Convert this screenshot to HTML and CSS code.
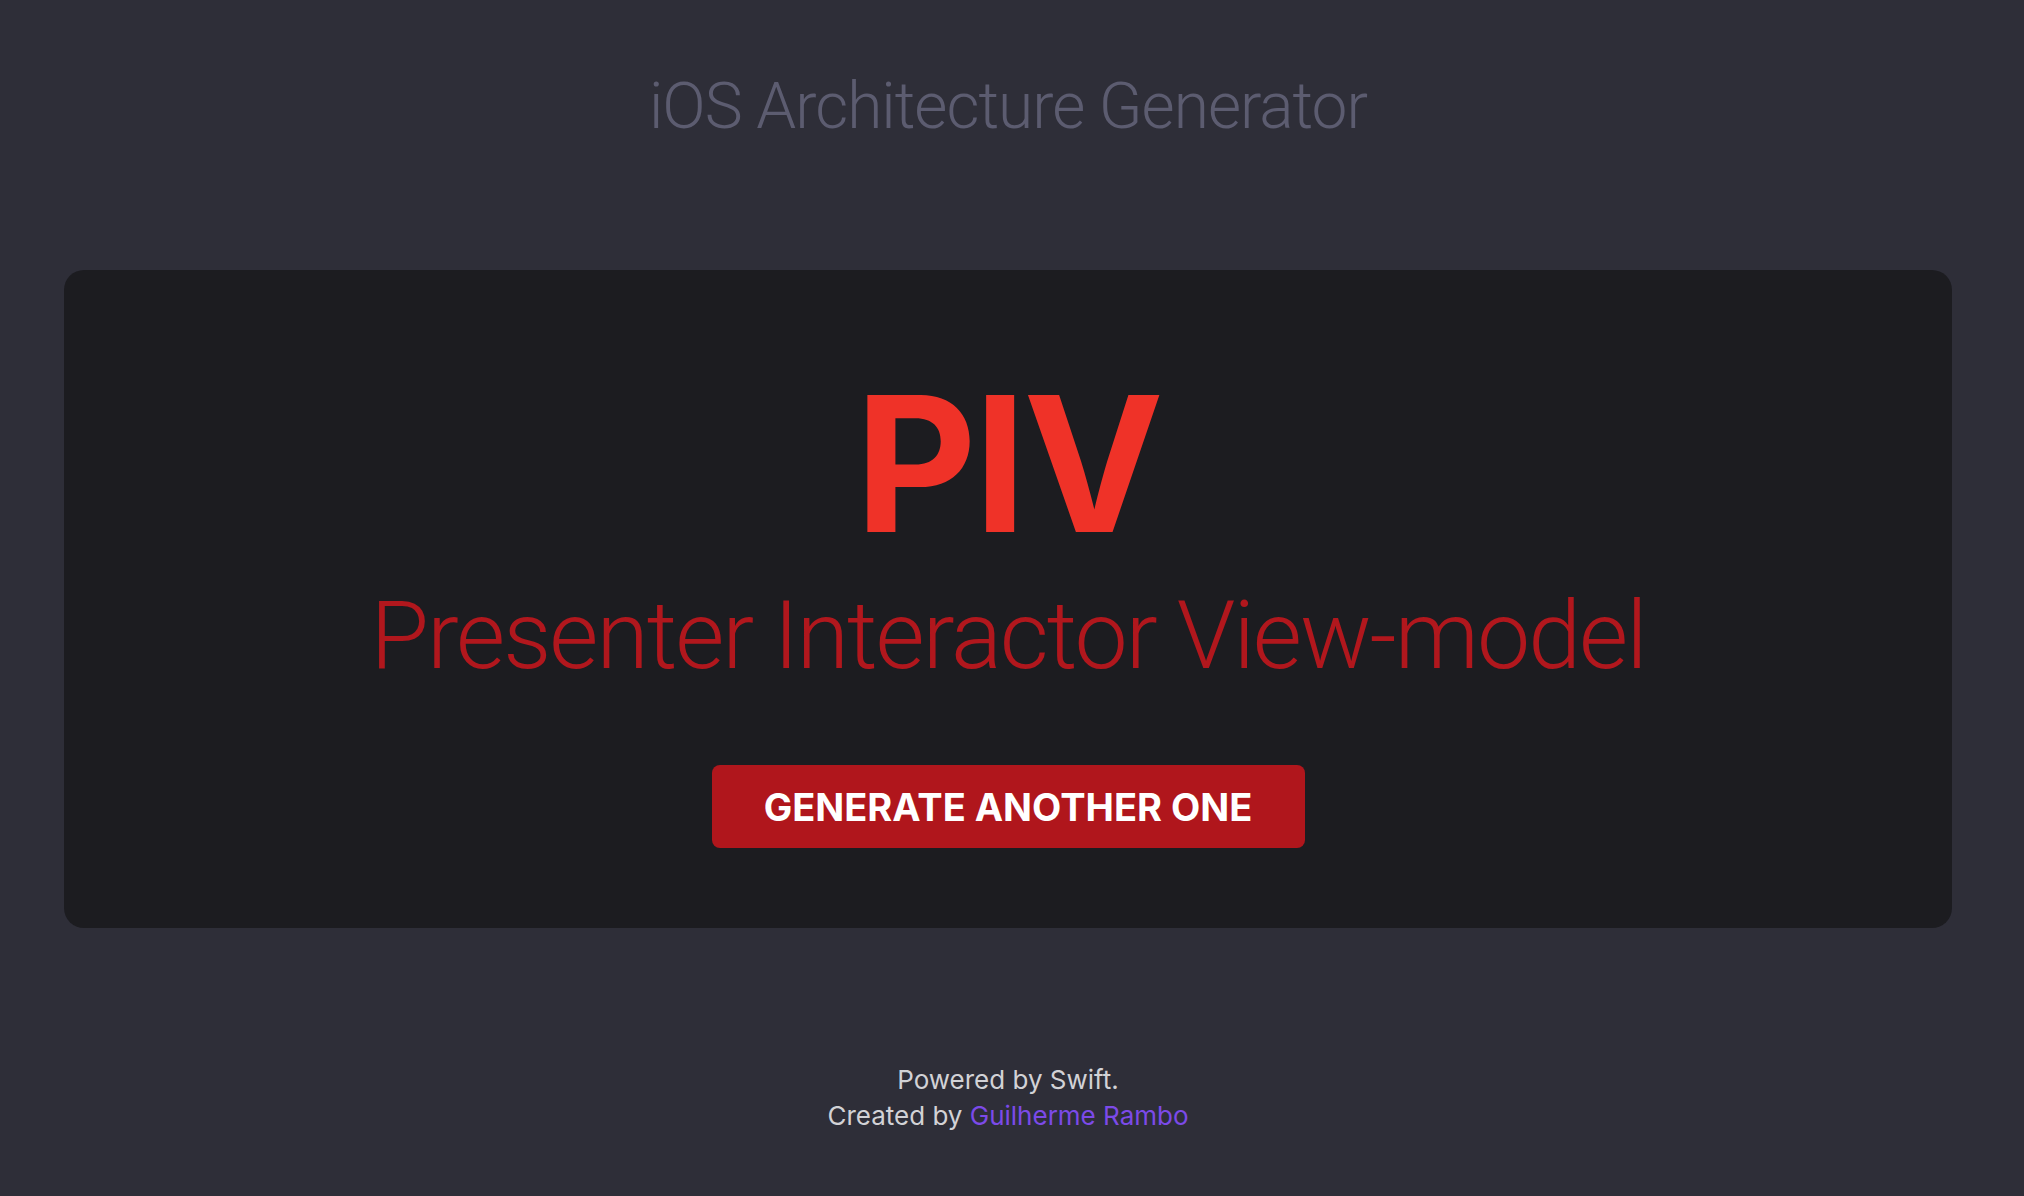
FILE: index.html
```html
<!DOCTYPE html>
<html lang="en">
<head>
<meta charset="utf-8">
<title>iOS Architecture Generator</title>
<link rel="stylesheet" href="styles.css">
</head>
<body>
<div class="page">
  <header class="header">
    <h1 class="title">iOS Architecture Generator</h1>
  </header>
  <main class="card">
    <div class="acronym">PIV</div>
    <div class="expansion">Presenter Interactor View-model</div>
    <button class="generate">GENERATE ANOTHER ONE</button>
  </main>
  <footer class="footer">
    <p class="footer-line">Powered by Swift.</p>
    <p class="footer-line">Created by <a class="author" href="#">Guilherme Rambo</a></p>
  </footer>
</div>
</body>
</html>
```

FILE: styles.css
```css
html, body {
  margin: 0;
  padding: 0;
}
body {
  background: #2e2e38;
  font-family: Inter, "Noto Sans", "Liberation Sans", sans-serif;
  min-height: 1196px;
}
.page {
  width: 2016px;
}
.header {
  padding-top: 69px;
  height: 270px;
  box-sizing: border-box;
  text-align: center;
}
.title {
  margin: 0;
  font-family: Roboto, Inter, sans-serif;
  font-size: 64px;
  line-height: 1.2;
  font-weight: 300;
  color: #5c5c70;
  letter-spacing: -1px;
}
.card {
  margin: 0 64px;
  background: #1c1c20;
  border-radius: 20px;
  height: 658px;
  box-sizing: border-box;
  padding-top: 100px;
  display: flex;
  flex-direction: column;
  align-items: center;
}
.acronym {
  font-size: 188px;
  line-height: 1;
  font-weight: 700;
  color: #ef3228;
  letter-spacing: -3px;
}
.expansion {
  margin-top: 30px;
  font-family: Roboto, Inter, sans-serif;
  font-size: 95px;
  line-height: 1;
  font-weight: 300;
  color: #b1171d;
  letter-spacing: -2px;
}
.generate {
  margin-top: 82px;
  width: 593px;
  height: 83px;
  border: 0;
  border-radius: 8px;
  background: #b0161c;
  color: #ffffff;
  font-family: inherit;
  font-size: 38px;
  font-weight: 700;
  letter-spacing: 0;
  cursor: pointer;
}
.footer {
  padding-top: 134px;
  text-align: center;
}
.footer-line {
  margin: 0;
  font-size: 26px;
  line-height: 36px;
  color: #d2d2d6;
}
.author {
  color: #7c4ae8;
  text-decoration: none;
}
```
